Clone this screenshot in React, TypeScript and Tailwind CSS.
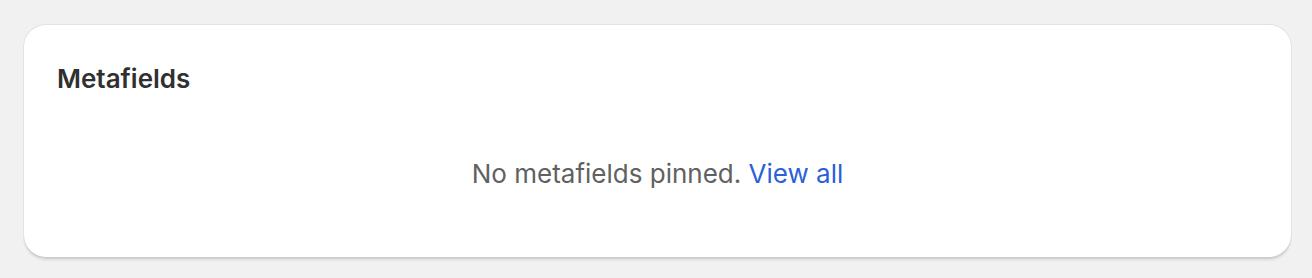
import React from "react";

export default function App() {
  return (
    <div
      className="w-[1312px] h-[278px] bg-[#f1f1f1] pt-[25px] pl-[24px]"
      style={{ fontFamily: "Inter, 'Noto Sans', sans-serif" }}
    >
      <div className="w-[1267px] h-[234px] bg-white rounded-[22px] shadow-[0_0_0_1px_#e3e3e3,inset_0_-2px_0_0_#cfcfcf,0_2px_2px_0_rgba(0,0,0,0.05)] pt-[36px] px-[33px]">
        <h2 className="text-[26px] leading-[36px] font-semibold text-[#303030]">Metafields</h2>
        <p className="mt-[59px] text-center text-[26px] leading-[36px] text-[#616161]">
          No metafields pinned.{" "}
          <a href="#" className="text-[#2c5fd8]">View all</a>
        </p>
      </div>
    </div>
  );
}
